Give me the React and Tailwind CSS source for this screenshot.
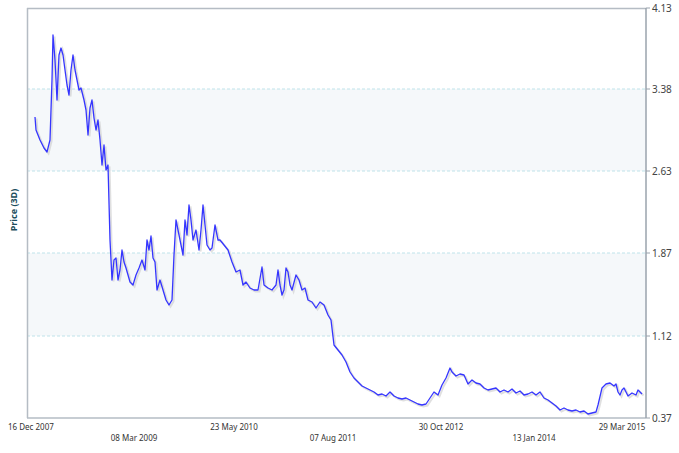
import React from 'react';

const pts = [[35,117],[36,130],[40,140],[44,148],[47,152],[50,140],[52,80],[53,35],[55,60],[57,100],[59,55],[61,48],[63,55],[65,70],[67,85],[69,95],[71,70],[73,55],[75,70],[77,80],[79,90],[81,88],[84,100],[86,110],[88,135],[90,108],[92,100],[94,118],[96,130],[98,120],[100,140],[102,165],[104,145],[106,170],[108,165],[110,240],[112,280],[114,260],[116,258],[118,280],[120,270],[122,250],[124,262],[126,268],[128,275],[130,282],[133,285],[136,275],[139,268],[142,260],[145,270],[147,240],[149,250],[151,236],[153,258],[155,262],[157,290],[160,280],[163,290],[166,300],[169,305],[172,300],[174,255],[176,220],[178,230],[180,240],[183,255],[185,220],[187,235],[189,205],[191,220],[193,240],[196,230],[199,250],[201,230],[203,205],[205,225],[207,245],[210,250],[212,248],[215,225],[218,240],[220,240],[224,245],[228,250],[232,262],[236,272],[240,270],[243,285],[246,282],[250,288],[254,290],[258,290],[262,267],[264,285],[268,288],[272,290],[276,285],[278,270],[280,285],[282,295],[284,290],[286,268],[288,272],[290,285],[292,290],[296,275],[299,280],[302,290],[305,288],[308,300],[312,302],[316,308],[320,302],[324,305],[328,315],[331,320],[334,345],[338,350],[342,355],[346,362],[350,372],[354,378],[358,382],[362,386],[366,388],[370,390],[374,392],[378,395],[382,394],[386,396],[390,392],[394,396],[398,398],[402,399],[406,398],[410,400],[414,402],[418,404],[422,405],[426,404],[430,398],[434,392],[438,395],[442,385],[446,378],[450,368],[452,372],[456,376],[460,374],[464,375],[468,384],[472,380],[476,383],[480,384],[484,388],[488,390],[492,389],[496,388],[500,392],[504,390],[508,392],[512,389],[516,393],[520,391],[524,395],[528,394],[532,392],[536,395],[540,392],[544,398],[548,400],[552,403],[556,406],[560,410],[564,408],[568,410],[572,411],[576,410],[580,412],[584,411],[588,414],[592,413],[596,412],[598,405],[602,388],[606,384],[610,383],[614,386],[616,384],[618,392],[620,395],[622,390],[624,388],[626,392],[628,396],[632,393],[636,395],[638,390],[642,394]];

const yLabels = [['4.13', 8], ['3.38', 89], ['2.63', 171], ['1.87', 253], ['1.12', 336], ['0.37', 418]];
const xLabels = [
  ['16 Dec 2007', 8, 0, 'start'], ['08 Mar 2009', 134, 1, 'middle'], ['23 May 2010', 234, 0, 'middle'],
  ['07 Aug 2011', 333, 1, 'middle'], ['30 Oct 2012', 441, 0, 'middle'], ['13 Jan 2014', 534, 1, 'middle'], ['29 Mar 2015', 622, 0, 'middle'],
];

export default function App() {
  const line = pts.map(p => p.join(',')).join(' ');
  return (
    <div className="w-[679px] h-[453px] bg-white overflow-hidden font-['Verdana','DejaVu_Sans',sans-serif]">
      <svg width="679" height="453" className="block">
        <rect x="27" y="89" width="619" height="82" fill="#f5f8fa" />
        <rect x="27" y="253" width="619" height="83" fill="#f5f8fa" />
        {[89, 171, 253, 336].map(y => (
          <line key={y} x1="27" x2="646" y1={y} y2={y} stroke="#bfe3ea" strokeDasharray="3,2" />
        ))}
        <line x1="27" x2="646" y1="8.5" y2="8.5" stroke="#b5bcc4" strokeWidth="1.5" />
        <line x1="27.5" x2="27.5" y1="8" y2="418" stroke="#b5bcc4" strokeWidth="1.5" />
        <line x1="27" x2="646" y1="418" y2="418" stroke="#b5bcc4" strokeWidth="1.5" />
        <line x1="646" x2="646" y1="8" y2="418" stroke="#9aa3ad" strokeWidth="1.5" />
        {yLabels.map(([, y]) => <line key={y} x1="646" x2="650" y1={y} y2={y} stroke="#9aa3ad" />)}
        <polyline points={line} fill="none" stroke="#ccc" strokeWidth="2" transform="translate(1.5,1.5)" opacity="0.6" />
        <polyline points={line} fill="none" stroke="#3535ff" strokeWidth="1.3" strokeLinejoin="round" />
        {yLabels.map(([t, y]) => (
          <text key={t} x="652" y={y + 4} fontSize="10" fill="#444">{t}</text>
        ))}
        {xLabels.map(([t, x, r, a]) => (
          <text key={t} x={x} y={r ? 441 : 430} fontSize="8" fill="#333" textAnchor={a}>{t}</text>
        ))}
        <text x="17" y="210" fontSize="9" fontWeight="bold" fill="#1a4d5c" textAnchor="middle" transform="rotate(-90 17 210)">Price (3D)</text>
      </svg>
    </div>
  );
}
